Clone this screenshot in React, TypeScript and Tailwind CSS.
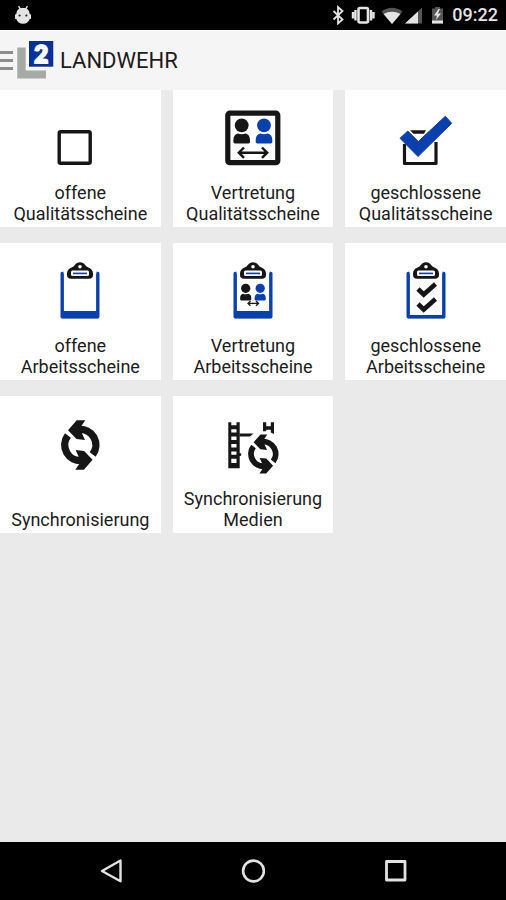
import type { ReactNode } from "react"

const BLUE = "#0a3fae"
const INK = "#161616"

function StatusBar() {
  return (
    <div className="flex h-[30px] items-center justify-between bg-black pr-2 pl-3.5 text-[#e4e4e4]">
      <svg width="18" height="20" viewBox="0 0 18 20" fill="currentColor" aria-hidden="true">
        <path d="M4.6 1.2l1.8 3M13.4 1.2l-1.8 3" stroke="currentColor" strokeWidth="1.4" />
        <path d="M2.500 8.500C2.500 5 5 3 9 3s6.500 2 6.500 5.500l1.500 1.200v4l-1.500.6c-.6 2.700-3.200 4.500-6.500 4.500s-5.900-1.800-6.500-4.500l-1.500-.6v-4z" />
        <circle cx="5.600" cy="10.500" r="1.100" fill="#222" />
        <circle cx="12.400" cy="10.500" r="1.100" fill="#222" />
      </svg>
      <div className="flex items-center">
        <svg width="120" height="20" viewBox="0 0 120 20" fill="currentColor" aria-hidden="true">
          {/* bluetooth */}
          <path d="M5.500 6l9 8.500-4.500 4V2l4.500 4-9 8.500" fill="none" stroke="currentColor" strokeWidth="1.800" />
          {/* vibrate */}
          <path d="M25 7v6.500M27.500 5v10.500M43 5v10.500M45.500 7v6.500" stroke="currentColor" strokeWidth="2.400" />
          <rect x="30.500" y="3" width="9.500" height="14.500" rx="1.500" fill="none" stroke="currentColor" strokeWidth="2.600" />
          {/* wifi */}
          <path d="M53.500 6.500Q64 -1 74.500 6.500L64 19z" fill="#555" />
          <path d="M55.500 9Q64 4.500 72.500 9L64 19z" />
          {/* signal */}
          <path d="M94 2.500v16H77z" fill="#555" />
          <path d="M90 6.500v12H77z" />
          {/* battery */}
          <path d="M107 2h5v1.500h3v15h-11v-15h3z" fill="#555" />
          <path d="M104 15.500h11v3h-11z" />
          <path d="M110.500 4l-4.500 6.500h3l-1 4.500 5-6.500h-3.200l2.200-4.500z" />
        </svg>
        <span className="ml-1 text-lg leading-5 font-medium">09:22</span>
      </div>
    </div>
  )
}

function Logo() {
  return (
    <svg width="38" height="42" viewBox="0 0 38 42" aria-hidden="true">
      <path d="M1.300 7.500H9.700V30.500H30v8H1.300z" fill="#a5aaa4" />
      <rect x="11" y="0" width="27" height="28.500" fill="#fff" />
      <rect x="13" y="1" width="24.300" height="25.700" fill="#08309b" />
      <text x="25.200" y="22.500" textAnchor="middle" fontSize="24" fontWeight="900" fill="#fff" stroke="#fff" strokeWidth="2" fontFamily="Lato, Roboto, sans-serif">
        2
      </text>
    </svg>
  )
}

function Header() {
  return (
    <header className="flex h-[60px] items-center border-t border-white bg-[#f5f5f5]">
      <button type="button" aria-label="Menü" className="flex w-4 flex-col gap-[5px]">
        <span className="h-[3px] w-[13px] bg-[#8c8c8c]" />
        <span className="h-[3px] w-[13px] bg-[#8c8c8c]" />
        <span className="h-[3px] w-[13px] bg-[#8c8c8c]" />
      </button>
      <Logo />
      <h1 className="ml-1.5 text-[22px] leading-7">LANDWEHR</h1>
    </header>
  )
}

function Person({ x, y, scale = 1, color }: { x: number; y: number; scale?: number; color: string }) {
  return (
    <g transform={`translate(${x} ${y}) scale(${scale})`} fill={color}>
      <circle r="6.900" />
      <path d="M-8.300 16.500v-2c0-3.400 1.800-5.600 4.500-6.200 2.400 1 5.200 1 7.600 0 2.700.6 4.500 2.800 4.500 6.200v2c0 1-.6 1.600-1.500 1.600H-6.800c-.9 0-1.500-.6-1.500-1.600z" />
    </g>
  )
}

function Clipboard({ base, children }: { base: number; children?: ReactNode }) {
  return (
    <>
      <path d="M23.500 16.500h-1.300v43.300h35.600V16.500h-1.300" fill="none" stroke={BLUE} strokeWidth="3.400" strokeLinejoin="round" />
      <rect x="21" y={61.300 - base} width="38" height={base} rx="1" fill={BLUE} />
      <path d="M27 18v-1.500c0-2.500 1.500-4.800 4-5.800l2.500-1.200c2-2.800 4-4.300 6.500-4.300s4.500 1.500 6.500 4.300l2.500 1.200c2.500 1 4 3.300 4 5.800V18c0 2.500-1.500 3.700-4 3.700H31c-2.500 0-4-1.200-4-3.700z" fill={INK} />
      <rect x="31" y="13.600" width="18" height="5.400" rx="1.500" fill="#fff" />
      <path d="M33 16.400h14" stroke={BLUE} strokeWidth="1.600" />
      <circle cx="40" cy="9.700" r="1.800" fill="#fff" />
      {children}
    </>
  )
}

function SyncArrow() {
  return (
    <>
      <path d="M38.500 19.600a15.500 15.500 0 0 1 14.200 24.800" fill="none" stroke={INK} strokeWidth="7.400" />
      <path d="M28 20.200l8.700-9.900h8.600l-5.600 8.200 5.300 11.400-8.500-.8z" fill={INK} />
    </>
  )
}

function Sync() {
  return (
    <>
      <SyncArrow />
      <g transform="rotate(180 40.300 35)">
        <SyncArrow />
      </g>
    </>
  )
}

const tiles: { lines: string[]; icon: ReactNode }[] = [
  {
    lines: ["offene", "Qualitätsscheine"],
    icon: <rect x="19.200" y="27.700" width="31" height="31.500" rx="1.500" fill="none" stroke={INK} strokeWidth="3.400" />,
  },
  {
    lines: ["Vertretung", "Qualitätsscheine"],
    icon: (
      <>
        <rect x="14.800" y="9.200" width="50" height="49.500" rx="2" fill="none" stroke={INK} strokeWidth="5.200" />
        <Person x={28.700} y={21.300} color={INK} />
        <Person x={51} y={21.300} color={BLUE} />
        <path d="M26 48.700h28M31 43.500l-5.200 5.200 5.200 5.200M49 43.500l5.200 5.200-5.200 5.200" fill="none" stroke={INK} strokeWidth="2.400" />
      </>
    ),
  },
  {
    lines: ["geschlossene", "Qualitätsscheine"],
    icon: (
      <>
        <path d="M18.500 40v19.500h31.500V38" fill="none" stroke={INK} strokeWidth="3.200" strokeLinejoin="round" />
        <path d="M24 26.300h16l-2 3.400H27.500z" fill={INK} />
        <path d="M14 34.300l7.800-7.300 10.500 10.500 27-25.200 6.400 7L32 52.500z" fill={BLUE} stroke={BLUE} strokeWidth="1" strokeLinejoin="round" />
      </>
    ),
  },
  { lines: ["offene", "Arbeitsscheine"], icon: <Clipboard base={7.300} /> },
  {
    lines: ["Vertretung", "Arbeitsscheine"],
    icon: (
      <Clipboard base={7.300}>
        <Person x={32.700} y={31.300} scale={0.67} color={INK} />
        <Person x={47.200} y={31.300} scale={0.67} color={BLUE} />
        <path d="M35.500 46.400h9.500M37.500 44l-2.500 2.400 2.500 2.400M43 44l2.500 2.400-2.500 2.400" fill="none" stroke={INK} strokeWidth="1.300" />
      </Clipboard>
    ),
  },
  {
    lines: ["geschlossene", "Arbeitsscheine"],
    icon: (
      <Clipboard base={3.300}>
        <path d="M32 32l5.700 5.500L49.500 27M32 47l5.700 5.500L49.500 42" fill="none" stroke={INK} strokeWidth="4.600" />
      </Clipboard>
    ),
  },
  { lines: ["Synchronisierung"], icon: <Sync /> },
  {
    lines: ["Synchronisierung", "Medien"],
    icon: (
      <>
        <path d="M15.300 12.300h3v3h5.200v-3h3.200v46H15.300z" fill={INK} />
        <path d="M18.300 19.200h5.200v3.400h-5.200zM18.300 26.600h5.200V30h-5.200zM18.300 34h5.200v3.400h-5.200zM18.300 41.400h5.200v3.400h-5.200zM18.300 48.800h5.200v4.200h-5.200z" fill="#fff" />
        <path d="M26.500 23.600h14l-3.500 2.800H26.500z" fill={INK} />
        <circle cx="26.800" cy="44.500" r="1.500" fill={INK} />
        <path d="M50 12.300h3.200v4h4.600v-4H61V24l-3.200-1.500v-2.800h-4.600v1.600H50z" fill={INK} />
        <g transform="translate(18.500 16.300) scale(.79)">
          <Sync />
        </g>
      </>
    ),
  },
]

function Tile({ lines, icon }: { lines: string[]; icon: ReactNode }) {
  return (
    <button type="button" className="flex h-[137px] flex-col items-center bg-white pt-3.5 pb-[3px]">
      <svg width="80" height="64" viewBox="0 0 80 64" aria-hidden="true">
        {icon}
      </svg>
      <span className="mt-auto text-lg leading-[21px]">
        {lines.map((line) => (
          <span key={line} className="block">
            {line}
          </span>
        ))}
      </span>
    </button>
  )
}

function NavBar() {
  return (
    <nav className="grid h-[58px] grid-cols-3 bg-black px-10 text-[#e2e2e2]">
      <button type="button" aria-label="Zurück" className="flex items-center justify-center">
        <svg width="24" height="24" viewBox="0 0 24 24" fill="none" stroke="currentColor" strokeWidth="2.400" strokeLinejoin="round">
          <path d="M21.500 1.500v20.800L3 12z" />
        </svg>
      </button>
      <button type="button" aria-label="Startseite" className="flex items-center justify-center">
        <svg width="24" height="24" viewBox="0 0 24 24" fill="none" stroke="currentColor" strokeWidth="2.600">
          <circle cx="12.500" cy="12" r="10.400" />
        </svg>
      </button>
      <button type="button" aria-label="Übersicht" className="flex items-center justify-center">
        <svg width="24" height="24" viewBox="0 0 24 24" fill="none" stroke="currentColor" strokeWidth="2.800" strokeLinejoin="round">
          <rect x="3.500" y="2.500" width="18.500" height="18.500" />
        </svg>
      </button>
    </nav>
  )
}

export default function App() {
  return (
    <div className="flex min-h-screen flex-col bg-[#eaeaea] font-[Roboto,sans-serif] text-[#1c1c1c]">
      <StatusBar />
      <Header />
      <main className="grid flex-1 grid-cols-3 content-start gap-x-3 gap-y-4">
        {tiles.map((tile) => (
          <Tile key={tile.lines.join(" ")} {...tile} />
        ))}
      </main>
      <NavBar />
    </div>
  )
}
